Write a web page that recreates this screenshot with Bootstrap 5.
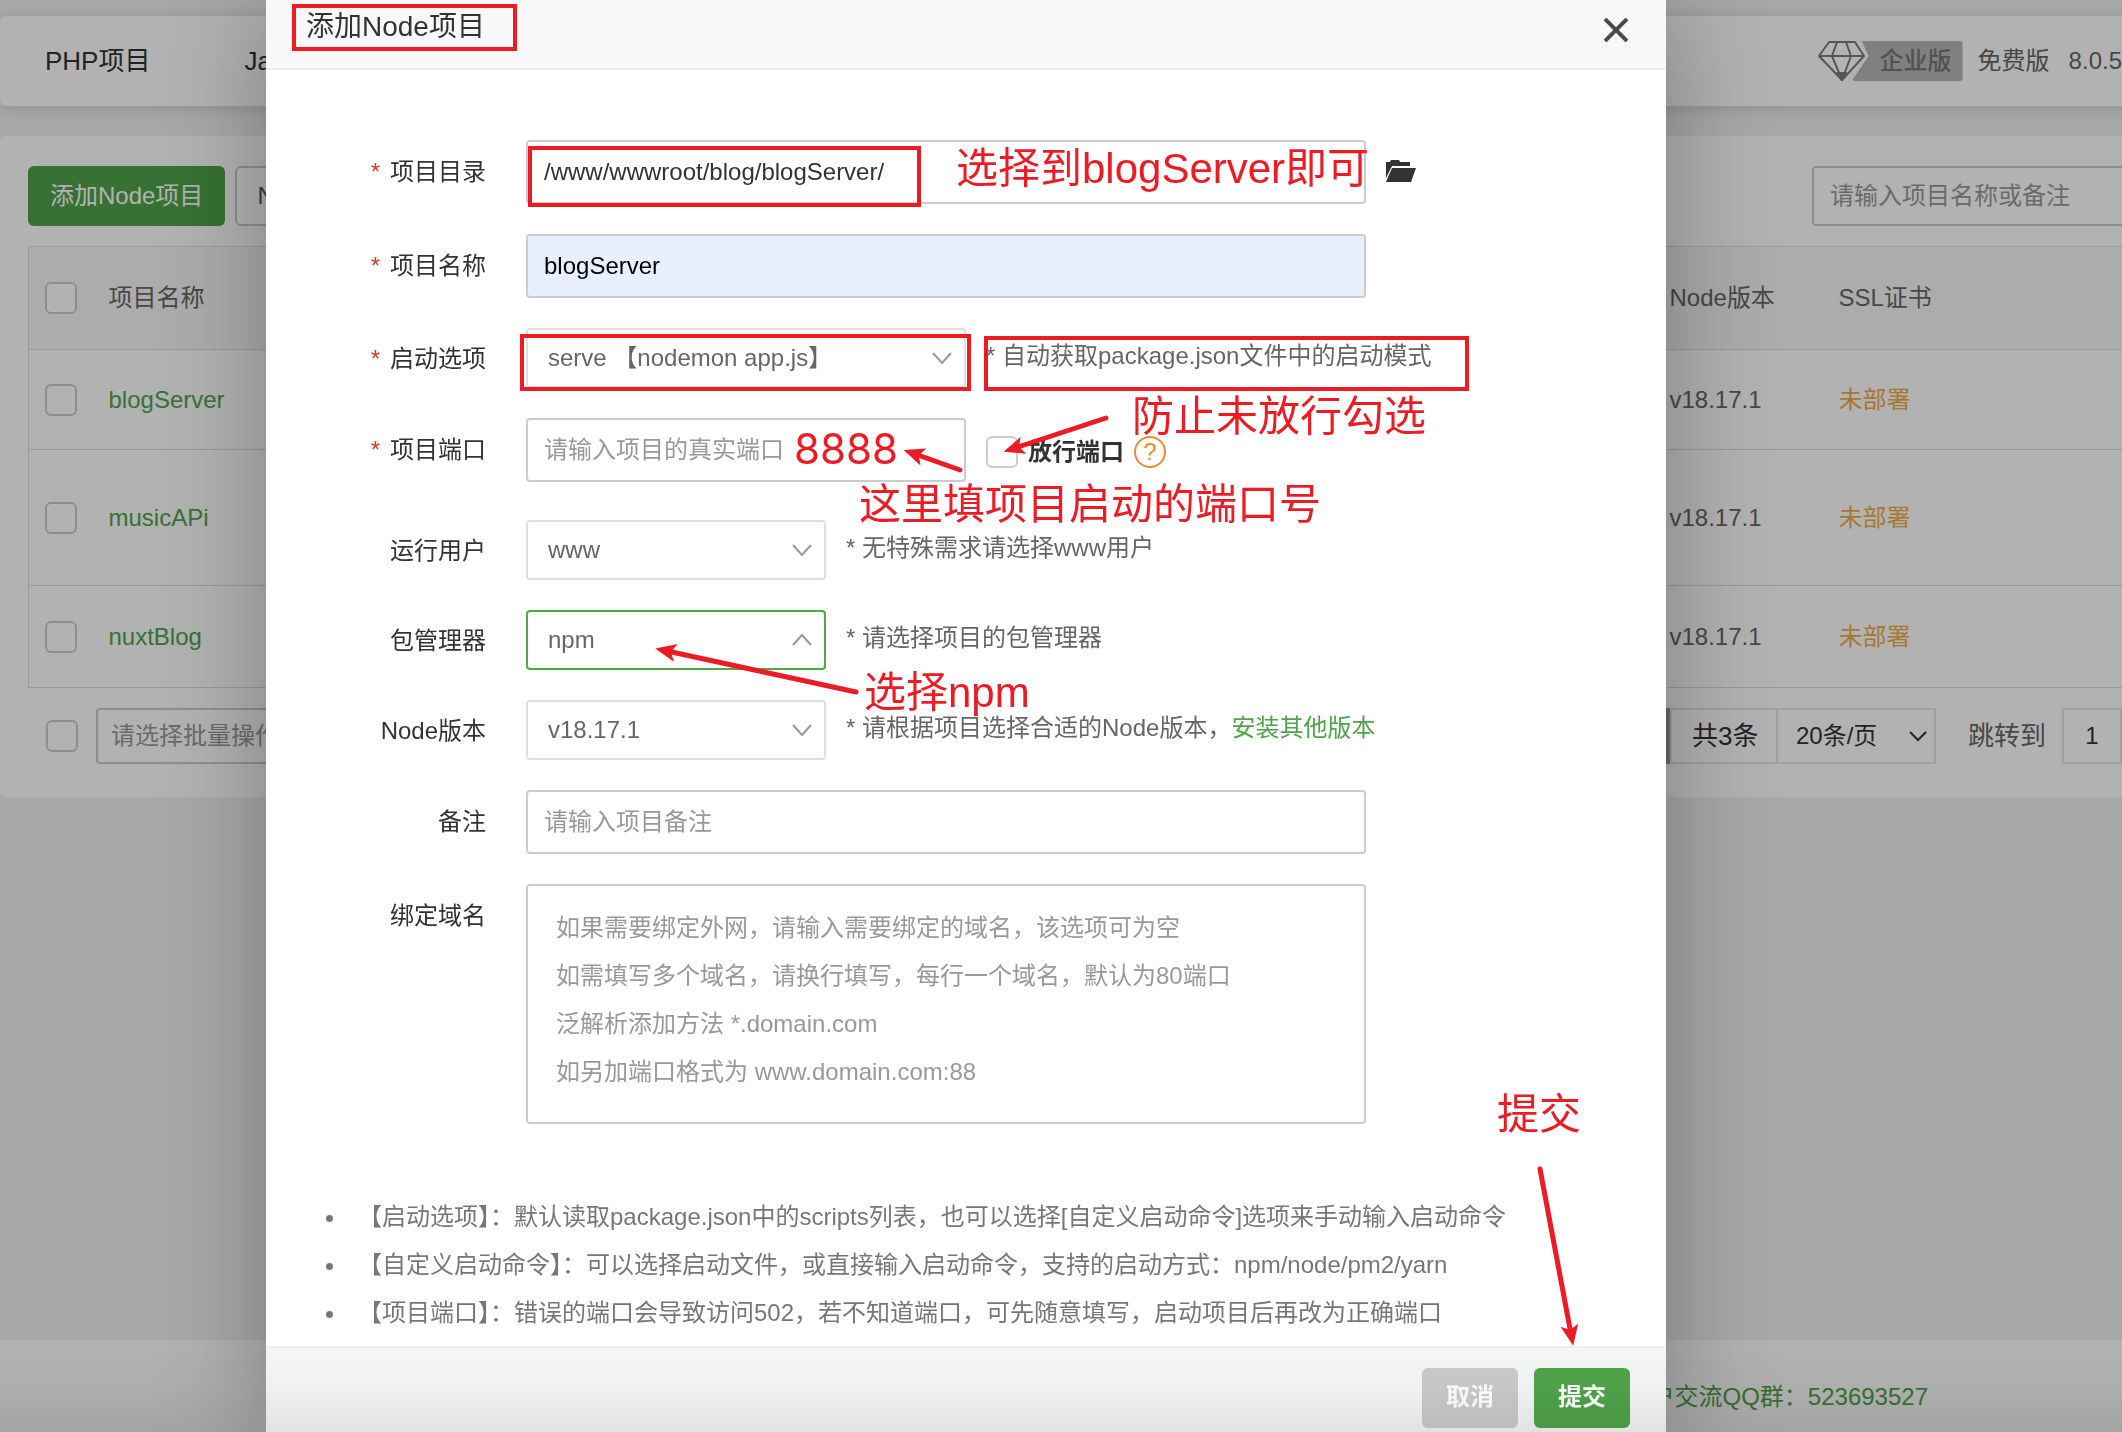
<!DOCTYPE html>
<html lang="zh-CN">
<head>
<meta charset="utf-8">
<meta name="viewport" content="width=device-width, initial-scale=1">
<title>添加Node项目</title>
<link href="https://cdn.jsdelivr.net/npm/bootstrap@5.3.0/dist/css/bootstrap.min.css" rel="stylesheet">
<style>
:root { --brand: #4fa34a; --line: #ccc; --note: #ed1c24; }
body { font-family: "Liberation Sans", "Noto Sans CJK SC", sans-serif; font-size: 24px; line-height: 36px; color: #666; background: #f1f1f1; overflow: hidden; }
a { color: var(--brand); text-decoration: none; }

/* page behind the dialog */
.page { width: calc(100% + 40px); height: 100vh; padding-top: 16px; }
.topnav { height: 90px; padding-left: 45px; gap: 94px; border-radius: 6px; box-shadow: 0 2px 16px rgba(0,0,0,.15); font-size: 26px; }
.topnav a { color: #333; }
.account { padding-right: 40px; font-size: 24px; gap: 15px; }
.edition { color: #747474; }
.edition-tag { background: #b8b8b8; height: 40px; width: 111px; margin-left: -13px; padding-left: 28px; line-height: 40px; font-weight: 500; border-radius: 3px; clip-path: polygon(0 100%, 17px 15px, 10px 0, 100% 0, 100% 100%); }
.panel { margin-top: 30px; padding: 30px 28px 33px; border-radius: 6px; }
.tools { gap: 10px; }
.btn-brand { background: var(--brand); color: #fff; font-size: 24px; height: 60px; border-radius: 6px; padding: 0 22px; border: 0; }
.btn-line { background: #fff; color: #555; font-size: 24px; height: 60px; border: 2px solid var(--line); border-radius: 6px; padding: 0 20px; }
.search-box { width: 322px; height: 60px; font-size: 24px; border: 2px solid var(--line); border-radius: 4px; padding: 0 16px; }
.form-control::placeholder { color: #999; opacity: 1; }
.projects { margin: 20px 0 20px; table-layout: fixed; border: 1px solid #ddd; --bs-table-color: #666; }
.projects th, .projects td { border: 0; border-bottom: 1px solid #ddd; padding: 0 0 0 16px; vertical-align: middle; font-weight: 400; height: 102px; }
.projects thead th { background: #f6f6f6; height: 103px; }
.projects tbody tr:first-child td { height: 100px; }
.projects tbody tr.tall td { height: 136px; }
.projects th.tight, .projects td.tight { padding-left: 0; }
.tick { width: 32px; height: 32px; margin: 0; border: 2px solid var(--line); border-radius: 4px; vertical-align: middle; flex: none; display: block; }
.state { color: #f0ab45; }
.batch-row { padding-left: 18px; }
.batch { width: 300px; height: 56px; margin-left: 18px; font-size: 24px; color: #999; border: 2px solid var(--line); border-radius: 4px; padding: 0 13px; background: #fff; }
.pager { margin-right: 8px; font-size: 26px; color: #333; }
.pager-now { width: 60px; height: 56px; background: #999; }
.pager-cell { height: 56px; border: 2px solid #e6e6e6; background-color: #fff; color: #333; }
.pager-total { width: 108px; padding: 0 20px; line-height: 52px; white-space: nowrap; }
.pager-size { width: 160px; margin-left: -2px; font-size: 24px; border-radius: 0; padding: 0 16px 0 18px; background-image: url("data:image/svg+xml,%3Csvg xmlns='http://www.w3.org/2000/svg' viewBox='0 0 18 12'%3E%3Cpath fill='none' stroke='%23333' stroke-width='2' d='m1 2 8 8 8-8'/%3E%3C/svg%3E"); background-size: 18px 12px; background-position: right 7px center; }
.pager-jump { margin: 0 16px 0 32px; color: #666; white-space: nowrap; }
.pager-page { width: 60px; border-radius: 0; padding: 0; text-align: center; font-size: 24px; }
.site-foot { height: 92px; padding: 39px 234px 0 0; }

.veil { position: fixed; inset: 0; background: rgba(0,0,0,.3); }
.shade { position: fixed; left: 0; right: 0; bottom: 0; height: 84px; background: linear-gradient(rgba(0,0,0,0), rgba(0,0,0,.02) 45%, rgba(0,0,0,.08)); pointer-events: none; }

/* dialog */
.dialog { position: absolute; top: 0; left: 266px; width: 1400px; background: #fff; box-shadow: 2px 2px 100px rgba(0,0,0,.3); }
.dialog-head { height: 70px; background: #f8f8f8; border-bottom: 2px solid #eee; padding: 0 38px 0 40px; }
.dialog-head h1 { font-size: 28px; line-height: 40px; margin: 7px 0 0; color: #333; font-weight: 400; }
.shut { border: 0; background: none; padding: 18px 0 0; line-height: 0; }
.fields { padding: 70px 0 0; }
.field { display: flex; margin-bottom: 30px; }
.field > label { width: 220px; margin-right: 40px; text-align: right; color: #333; line-height: 64px; }
.field.short { height: 60px; }
.field.short > label { line-height: 62px; }
.must { color: #e5352b; margin-right: 10px; }
.box { height: 64px; width: 840px; border: 2px solid var(--line); border-radius: 4px; font-size: 24px; color: #333; padding: 0 16px; }
.box.half { width: 440px; }
.filled { background: #e8effd; color: #000; }
.pick { height: 60px; width: 300px; border: 2px solid #dcdfe6; border-radius: 4px; font-size: 24px; color: #666; padding: 0 50px 0 20px; background-image: url("data:image/svg+xml,%3Csvg xmlns='http://www.w3.org/2000/svg' viewBox='0 0 20 12'%3E%3Cpath fill='none' stroke='%23999' stroke-width='2' d='m1 1 9 10 9-10'/%3E%3C/svg%3E"); background-size: 20px 12px; background-position: right 12px center; }
.pick.half { width: 440px; }
.pick.open { border-color: #4fa64b; background-image: url("data:image/svg+xml,%3Csvg xmlns='http://www.w3.org/2000/svg' viewBox='0 0 20 12'%3E%3Cpath fill='none' stroke='%23999' stroke-width='2' d='m1 11 9-10 9 10'/%3E%3C/svg%3E"); }
.hint { margin-left: 20px; line-height: 56px; }
.folder { margin: 0 0 0 20px; padding: 0; border: 0; background: none; line-height: 0; }
.release { margin-left: 20px; padding-top: 4px; gap: 10px; color: #333; font-weight: 700; }
.ask { width: 32px; height: 32px; border: 2px solid #ee8a33; border-radius: 50%; color: #ee8a33; font-weight: 400; font-size: 24px; line-height: 28px; text-align: center; }
.domains { width: 840px; height: 240px; border: 2px solid var(--line); border-radius: 4px; font-size: 24px; line-height: 48px; padding: 18px 28px; resize: none; }
.tips { margin: 69px 0 9px; padding-left: 92px; list-style: none; color: #777; line-height: 48px; }
.tips li::before { content: ""; display: inline-block; width: 7px; height: 7px; border-radius: 50%; background: #777; margin: 0 25px 3px -32px; }
.dialog-foot { background: #f5f7f7; border-top: 2px solid #ebefef; padding: 20px 36px; gap: 16px; }
.act { width: 96px; height: 60px; padding: 0 0 2px; border: 0; border-radius: 6px; font-size: 24px; font-weight: 700; color: #fff; }
.act-off { background: #cbcbcb; }
.act-on { background: #50a44b; }

/* hand-drawn notes over the dialog */
.note { position: absolute; font-size: 42px; line-height: 50px; color: var(--note); white-space: nowrap; }
.frame { position: absolute; border: 4px solid var(--note); }
.arrows { position: absolute; top: 0; left: 0; pointer-events: none; }
</style>
<script src="https://cdn.jsdelivr.net/npm/bootstrap@5.3.0/dist/js/bootstrap.bundle.min.js"></script>
</head>
<body>
<div class="page d-flex flex-column">
  <nav class="topnav bg-white d-flex align-items-center">
    <a href="#">PHP项目</a>
    <a href="#">Java项目</a>
    <div class="account d-flex align-items-center ms-auto">
      <div class="edition d-flex align-items-center">
        <svg width="47" height="40" viewBox="0 0 47 40" fill="none" stroke="#7c7c7c" stroke-width="2" stroke-linejoin="round"><path d="M11 1h26l9 14-22 24L1 15zM1 15h45M19 1l-5 14 10 24 9-24-5-14"/><path d="M19 32h9l-4.500 7z" fill="#7c7c7c"/></svg>
        <span class="edition-tag">企业版</span>
      </div>
      <span>免费版</span>
      <span class="ms-1">8.0.5</span>
    </div>
  </nav>

  <main class="panel bg-white">
    <div class="d-flex justify-content-between">
      <div class="tools d-flex">
        <button class="btn btn-brand" type="button">添加Node项目</button>
        <button class="btn btn-line" type="button">Node版本管理器</button>
      </div>
      <input class="form-control search-box" type="search" aria-label="搜索项目" placeholder="请输入项目名称或备注">
    </div>
    <table class="table projects">
      <colgroup><col style="width:64px"><col><col style="width:169px"><col style="width:295px"></colgroup>
      <thead>
        <tr><th><input class="form-check-input tick" type="checkbox" aria-label="全选"></th><th>项目名称</th><th class="tight">Node版本</th><th class="tight">SSL证书</th></tr>
      </thead>
      <tbody>
        <tr><td><input class="form-check-input tick" type="checkbox" aria-label="选择 blogServer"></td><td><a href="#">blogServer</a></td><td class="tight">v18.17.1</td><td class="tight state">未部署</td></tr>
        <tr class="tall"><td><input class="form-check-input tick" type="checkbox" aria-label="选择 musicAPi"></td><td><a href="#">musicAPi</a></td><td class="tight">v18.17.1</td><td class="tight state">未部署</td></tr>
        <tr><td><input class="form-check-input tick" type="checkbox" aria-label="选择 nuxtBlog"></td><td><a href="#">nuxtBlog</a></td><td class="tight">v18.17.1</td><td class="tight state">未部署</td></tr>
      </tbody>
    </table>
    <div class="batch-row d-flex align-items-center">
      <input class="form-check-input tick" type="checkbox" aria-label="全选本页">
      <select class="form-select batch" aria-label="批量操作"><option>请选择批量操作</option></select>
      <div class="pager d-flex align-items-center ms-auto">
        <span class="pager-now"></span>
        <span class="pager-cell pager-total">共3条</span>
        <select class="form-select pager-cell pager-size" aria-label="每页条数"><option>20条/页</option></select>
        <label class="pager-jump" for="jump">跳转到</label>
        <input class="form-control pager-cell pager-page me-1" id="jump" type="text" value="1">
      </div>
    </div>
  </main>
  <footer class="site-foot bg-white mt-auto text-end"><a href="#">用户交流QQ群：523693527</a></footer>
</div>
<div class="veil"></div>

<div class="dialog" role="dialog" aria-labelledby="dlg-title">
  <header class="dialog-head d-flex justify-content-between align-items-start">
    <h1 id="dlg-title">添加Node项目</h1>
    <button class="shut" type="button" aria-label="关闭"><svg width="24" height="24" viewBox="0 0 24 24" stroke="#4a4a52" stroke-width="4"><path d="m1 1 22 22M23 1 1 23"/></svg></button>
  </header>

  <form class="fields">
    <div class="field align-items-center">
      <label for="dir"><span class="must">*</span>项目目录</label>
      <input class="form-control box" id="dir" type="text" value="/www/wwwroot/blog/blogServer/">
      <button class="folder" type="button" aria-label="选择目录"><svg width="30" height="24" viewBox="0 0 30 24" fill="#333"><path d="M0 2h4l1-2h8l1 2h10v4H6L0 18zM6 8h24l-5 14H0z"/></svg></button>
    </div>
    <div class="field">
      <label for="name"><span class="must">*</span>项目名称</label>
      <input class="form-control box filled" id="name" type="text" value="blogServer">
    </div>
    <div class="field short">
      <label for="start"><span class="must">*</span>启动选项</label>
      <select class="form-select pick half" id="start"><option>serve 【nodemon app.js】</option></select>
      <span class="hint">* 自动获取package.json文件中的启动模式</span>
    </div>
    <div class="field pb-2">
      <label for="port"><span class="must">*</span>项目端口</label>
      <input class="form-control box half" id="port" type="text" placeholder="请输入项目的真实端口">
      <div class="release d-flex align-items-center">
        <input class="form-check-input tick" id="release" type="checkbox">
        <label for="release">放行端口</label>
        <span class="ask">?</span>
      </div>
    </div>
    <div class="field short">
      <label for="user">运行用户</label>
      <select class="form-select pick" id="user"><option>www</option></select>
      <span class="hint">* 无特殊需求请选择www用户</span>
    </div>
    <div class="field short">
      <label for="pkg">包管理器</label>
      <select class="form-select pick open" id="pkg"><option>npm</option></select>
      <span class="hint">* 请选择项目的包管理器</span>
    </div>
    <div class="field short">
      <label for="ver">Node版本</label>
      <select class="form-select pick" id="ver"><option>v18.17.1</option></select>
      <span class="hint">* 请根据项目选择合适的Node版本，<a href="#">安装其他版本</a></span>
    </div>
    <div class="field">
      <label for="memo">备注</label>
      <input class="form-control box" id="memo" type="text" placeholder="请输入项目备注">
    </div>
    <div class="field mb-0">
      <label for="domains">绑定域名</label>
      <textarea class="form-control domains" id="domains" placeholder="如果需要绑定外网，请输入需要绑定的域名，该选项可为空&#10;如需填写多个域名，请换行填写，每行一个域名，默认为80端口&#10;泛解析添加方法 *.domain.com&#10;如另加端口格式为 www.domain.com:88"></textarea>
    </div>
    <ul class="tips">
      <li>【启动选项】：默认读取package.json中的scripts列表，也可以选择[自定义启动命令]选项来手动输入启动命令</li>
      <li>【自定义启动命令】：可以选择启动文件，或直接输入启动命令，支持的启动方式：npm/node/pm2/yarn</li>
      <li>【项目端口】：错误的端口会导致访问502，若不知道端口，可先随意填写，启动项目后再改为正确端口</li>
    </ul>
    <div class="dialog-foot d-flex justify-content-end">
      <button class="btn act act-off" type="button">取消</button>
      <button class="btn act act-on" type="submit">提交</button>
    </div>
  </form>

  <div class="frame" style="left:26px;top:4px;width:225px;height:47px"></div>
  <div class="frame" style="left:262px;top:146px;width:393px;height:61px"></div>
  <div class="frame" style="left:254px;top:334px;width:451px;height:57px"></div>
  <div class="frame" style="left:718px;top:336px;width:485px;height:55px"></div>
  <span class="note" style="left:690px;top:144px">选择到blogServer即可</span>
  <span class="note" style="left:866px;top:392px">防止未放行勾选</span>
  <span class="note" style="left:528px;top:424px;font-family:Inter,sans-serif">8888</span>
  <span class="note" style="left:593px;top:480px">这里填项目启动的端口号</span>
  <span class="note" style="left:598px;top:668px">选择npm</span>
  <span class="note" style="left:1231px;top:1090px">提交</span>
  <svg class="arrows" width="1400" height="1432" viewBox="266 0 1400 1432" fill="none" stroke="#ed1c24" stroke-width="5" stroke-linecap="round">
    <defs><marker id="head" markerUnits="userSpaceOnUse" markerWidth="24" markerHeight="20" refX="10" refY="9" orient="auto"><path d="M22 9 1 0l5 9-5 9z" fill="#ed1c24" stroke="none"/></marker></defs>
    <path marker-end="url(#head)" d="M1106 418 1015 448"/>
    <path marker-end="url(#head)" d="M960 470 915 454"/>
    <path marker-end="url(#head)" d="M856 692 667 651"/>
    <path marker-end="url(#head)" d="M1540 1169 1571 1334"/>
  </svg>
</div>
<div class="shade"></div>
</body>
</html>
